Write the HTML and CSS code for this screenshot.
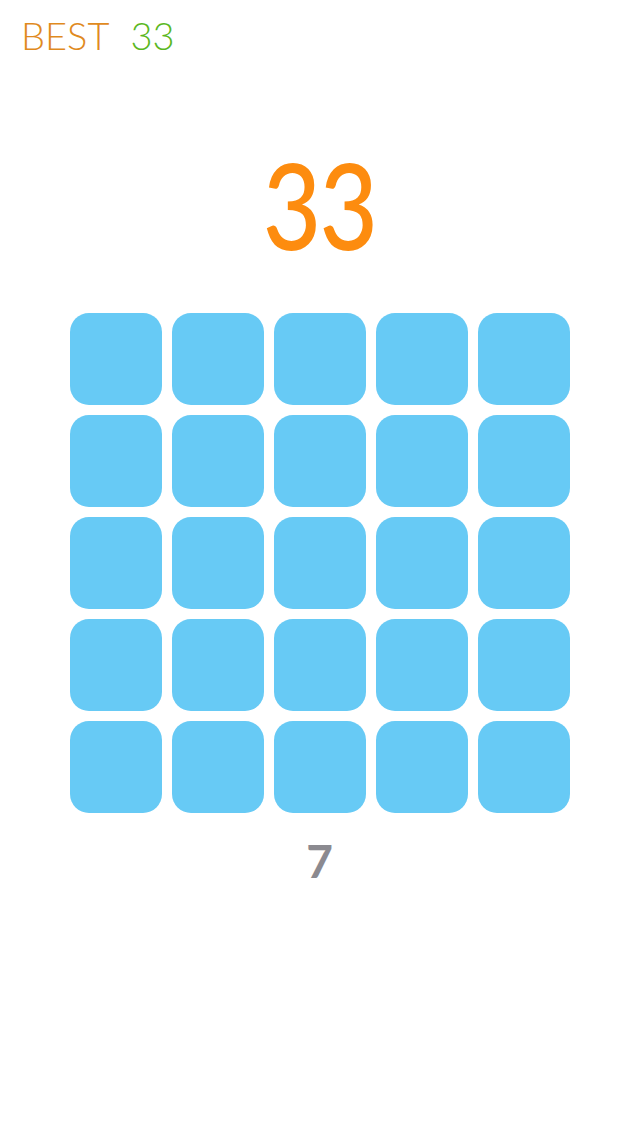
FILE: index.html
```html
<!DOCTYPE html>
<html lang="en">
<head>
    <meta charset="UTF-8">
    <meta name="viewport" content="width=device-width, initial-scale=1.0">
    <title>Tiles</title>
    <link rel="stylesheet" href="styles.css">
</head>
<body>

<div id="game">
    <div class="best">
        <span class="best-label">BEST</span>
        <span class="best-value">33</span>
    </div>

    <div class="score">33</div>

    <div class="board">
        <div class="tile"></div>
        <div class="tile"></div>
        <div class="tile"></div>
        <div class="tile"></div>
        <div class="tile"></div>
        <div class="tile"></div>
        <div class="tile"></div>
        <div class="tile"></div>
        <div class="tile"></div>
        <div class="tile"></div>
        <div class="tile"></div>
        <div class="tile"></div>
        <div class="tile"></div>
        <div class="tile"></div>
        <div class="tile"></div>
        <div class="tile"></div>
        <div class="tile"></div>
        <div class="tile"></div>
        <div class="tile"></div>
        <div class="tile"></div>
        <div class="tile"></div>
        <div class="tile"></div>
        <div class="tile"></div>
        <div class="tile"></div>
        <div class="tile"></div>
    </div>

    <div class="moves">7</div>
</div>

</body>
</html>
```

FILE: styles.css
```css
body {
    margin: 0;
    background-color: #fff;
    font-family: Lato, "Noto Sans", sans-serif;
}
#game {
    width: 639px;
    height: 1136px;
    display: flex;
    flex-direction: column;
    align-items: center;
}
.best {
    align-self: flex-start;
    display: flex;
    gap: 21px;
    padding: 11px 0 0 21px;
    font-size: 38px;
    font-weight: 300;
    line-height: 48px;
}
.best-label {
    color: #e08a1e;
}
.best-value {
    color: #5cb81f;
}
.score {
    margin-top: 85px;
    font-size: 120px;
    font-weight: 500;
    line-height: 120px;
    letter-spacing: -2px;
    color: #fd8c0f;
    transform: scaleX(0.84);
}
.board {
    margin-top: 49px;
    display: grid;
    grid-template-columns: repeat(5, 92px);
    grid-auto-rows: 92px;
    gap: 10px;
}
.tile {
    background-color: #67caf5;
    border-radius: 19px;
}
.moves {
    margin-top: 25px;
    font-size: 46px;
    font-weight: 700;
    line-height: 46px;
    color: #8b8a90;
}
```
